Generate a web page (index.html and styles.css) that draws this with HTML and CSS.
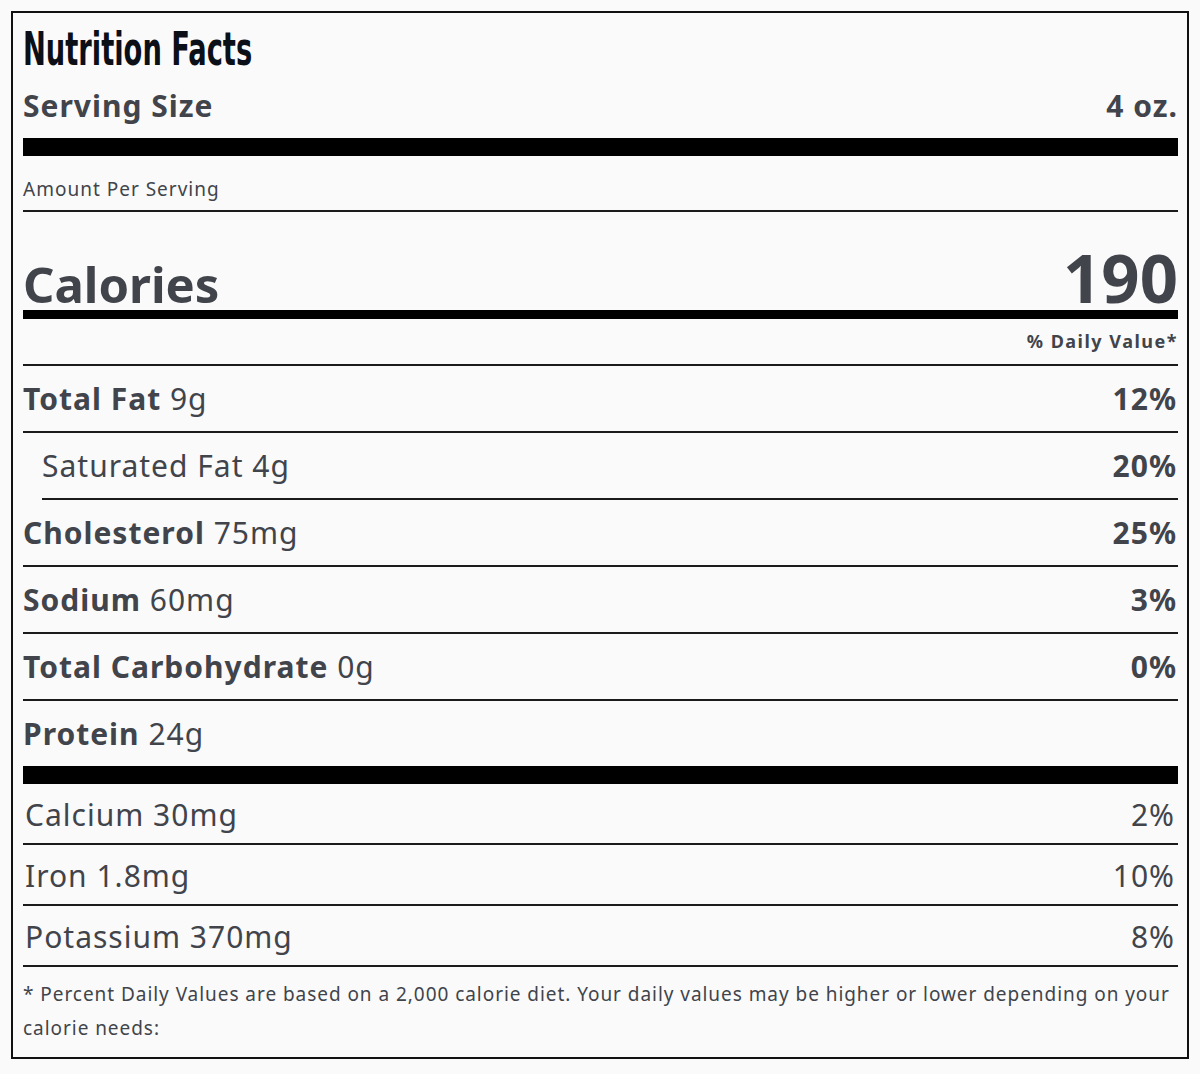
FILE: index.html
```html
<!DOCTYPE html>
<html lang="en">
<head>
<meta charset="utf-8">
<title>Nutrition Facts</title>
<link rel="stylesheet" href="styles.css">
</head>
<body>
<section class="label">
  <h1 class="title"><span class="title-text">Nutrition Facts</span></h1>
  <div class="serving">
    <span>Serving Size</span>
    <span>4 oz.</span>
  </div>
  <div class="bar"></div>
  <div class="amount">Amount Per Serving</div>
  <div class="calories">
    <span class="cal-label">Calories</span>
    <span class="cal-value">190</span>
  </div>
  <div class="dv-head">% Daily Value*</div>
  <div class="row"><span><b>Total Fat</b> 9g</span><b>12%</b></div>
  <div class="row row-sub"><span>Saturated Fat 4g</span><b>20%</b></div>
  <div class="row"><span><b>Cholesterol</b> 75mg</span><b>25%</b></div>
  <div class="row"><span><b>Sodium</b> 60mg</span><b>3%</b></div>
  <div class="row"><span><b>Total Carbohydrate</b> 0g</span><b>0%</b></div>
  <div class="row row-last"><span><b>Protein</b> 24g</span></div>
  <div class="bar"></div>
  <div class="vit"><span>Calcium 30mg</span><span>2%</span></div>
  <div class="vit"><span>Iron 1.8mg</span><span>10%</span></div>
  <div class="vit"><span>Potassium 370mg</span><span>8%</span></div>
  <p class="note">* Percent Daily Values are based on a 2,000 calorie diet. Your daily values may be higher or lower depending on your calorie needs:</p>
</section>
</body>
</html>
```
FILE: styles.css
```css
html, body {
  margin: 0;
  padding: 0;
  background: #fafafa;
}
body {
  font-family: "Noto Sans", "Open Sans", sans-serif;
  color: #41444b;
}
.label {
  box-sizing: border-box;
  width: 1178px;
  height: 1048px;
  margin: 11px 0 0 11px;
  border: 2px solid #111;
  padding: 0 9px 0 10px;
}
.title {
  margin: 11px 0 0;
  font-family: "DejaVu Sans Condensed", "DejaVu Sans", sans-serif;
  font-weight: 700;
  font-size: 46px;
  line-height: 50px;
  color: #0b0f17;
  letter-spacing: 0;
}
.title-text {
  display: inline-block;
  transform: scaleX(0.66);
  transform-origin: left center;
}
.serving {
  display: flex;
  justify-content: space-between;
  align-items: baseline;
  font-weight: 700;
  font-size: 30px;
  line-height: 44px;
  letter-spacing: 1px;
  margin-top: 10px;
}
.bar {
  height: 18px;
  background: #000;
}
.serving + .bar { margin-top: 10px; }
.amount {
  font-size: 19px;
  letter-spacing: 1px;
  line-height: 24px;
  padding: 21px 0 9px;
  border-bottom: 2px solid #1b1b1b;
}
.calories {
  display: flex;
  justify-content: space-between;
  align-items: baseline;
  font-weight: 700;
  box-sizing: border-box;
  height: 107px;
  padding-top: 25px;
  border-bottom: 9px solid #000;
}
.cal-label {
  font-size: 49px;
  line-height: 80px;
}
.cal-value {
  font-size: 67px;
  line-height: 80px;
}
.dv-head {
  text-align: right;
  font-weight: 700;
  font-size: 18px;
  letter-spacing: 1.5px;
  line-height: 24px;
  padding: 10px 0 11px;
  border-bottom: 2px solid #1b1b1b;
}
.row {
  display: flex;
  justify-content: space-between;
  align-items: center;
  height: 67px;
  box-sizing: border-box;
  border-bottom: 2px solid #1b1b1b;
  font-size: 30px;
  letter-spacing: 1px;
  padding-right: 1px;
}
.row-sub { margin-left: 19px; }
.row-last { border-bottom: 0; height: 65px; }
.vit {
  display: flex;
  justify-content: space-between;
  align-items: center;
  height: 61px;
  box-sizing: border-box;
  border-bottom: 2px solid #1b1b1b;
  font-size: 30px;
  letter-spacing: 1px;
  padding: 2px 3px 0 2px;
}
.note {
  margin: 0;
  padding-top: 10px;
  font-size: 19px;
  line-height: 34px;
  letter-spacing: 0.95px;
}
```
